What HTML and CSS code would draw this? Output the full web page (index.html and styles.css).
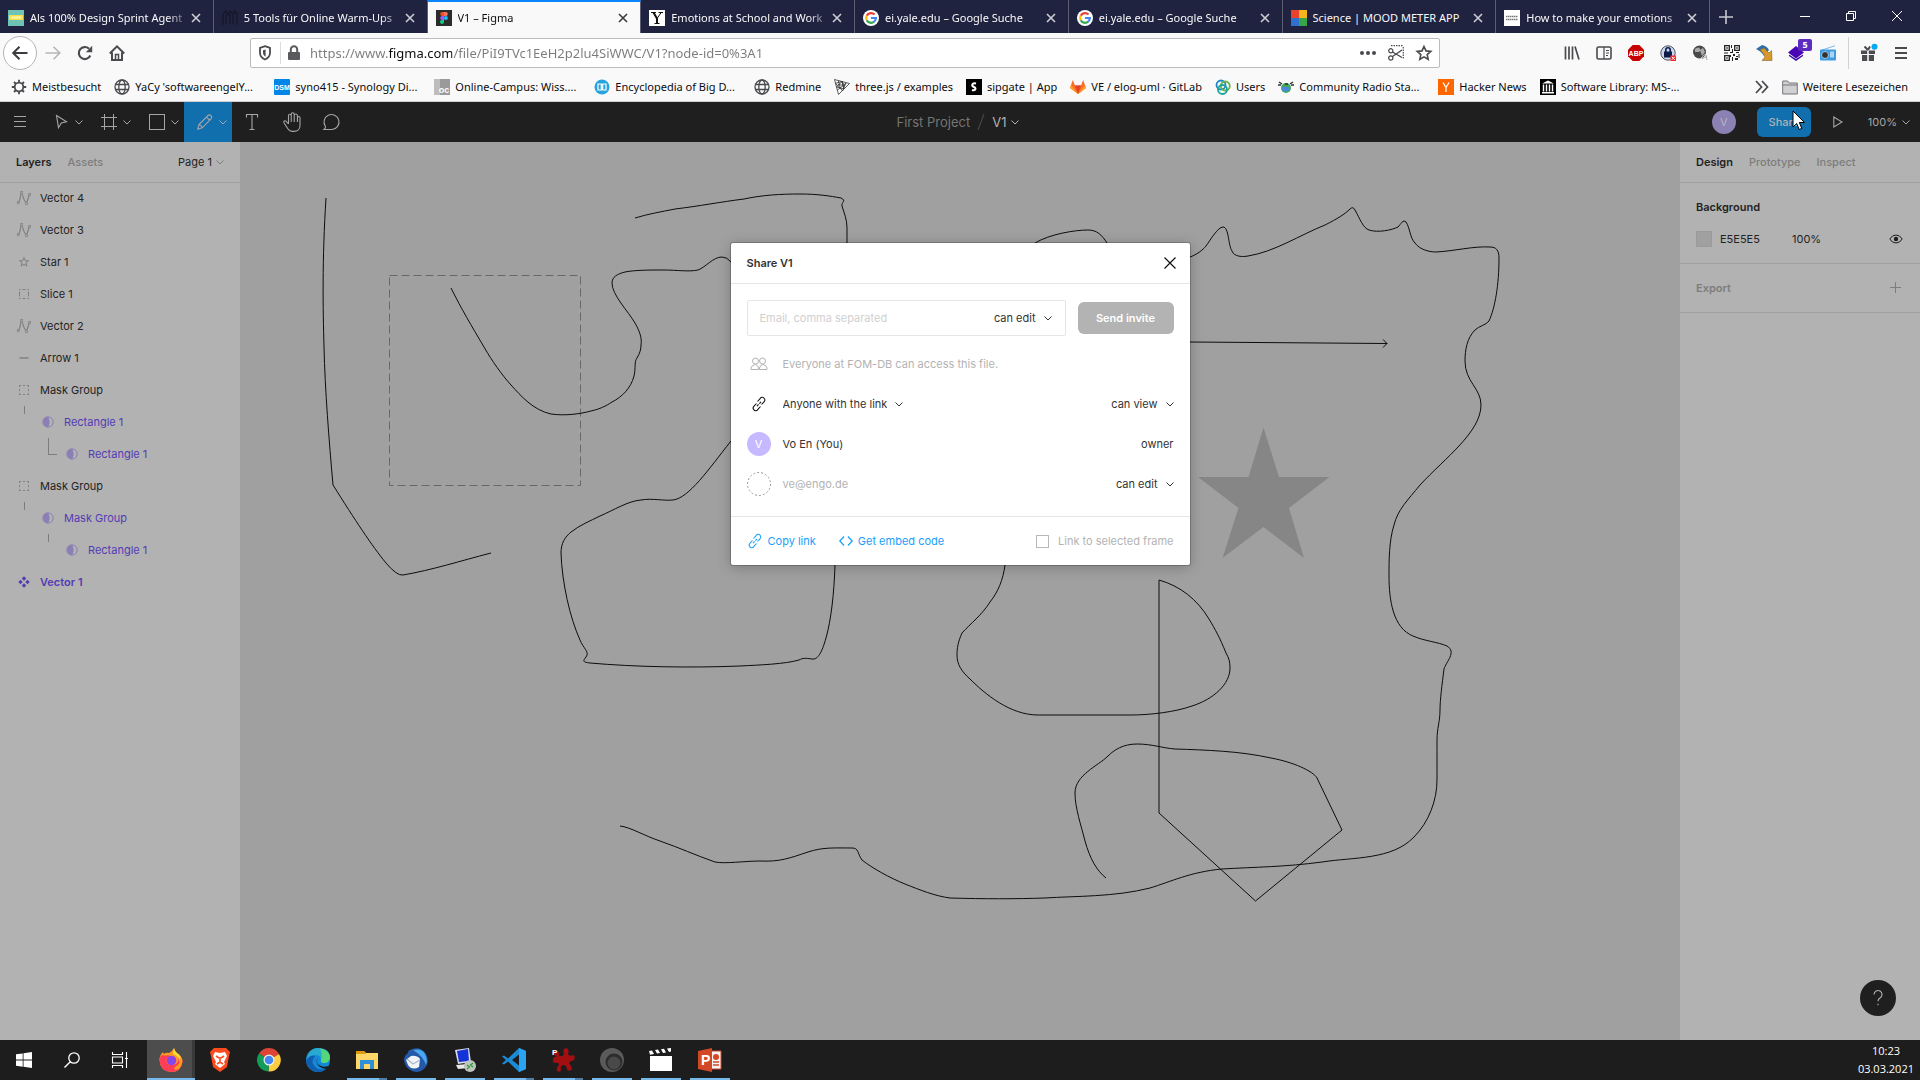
FILE: index.html
```html
<!DOCTYPE html>
<html lang="de">
<head>
<meta charset="utf-8">
<title>V1 – Figma</title>
<link rel="stylesheet" href="styles.css">
</head>
<body>
<svg class="defs" aria-hidden="true">
  <symbol id="chev" viewBox="0 0 8 8"><path d="M.5 2.500 4 6l3.500-3.500" fill="none" stroke="currentColor"/></symbol>
  <symbol id="x" viewBox="0 0 10 10"><path d="M1 1l8 8M9 1 1 9" fill="none" stroke="currentColor" stroke-width="1.600"/></symbol>
  <symbol id="vec" viewBox="0 0 16 16"><path d="M2.500 12C5 10 4 3.500 5.500 3.500S7.500 12 10 12s1.500-5 3.500-7" fill="none" stroke="currentColor" stroke-width="1.200"/><path d="M1.300 11.500h2v2h-2zM12.500 3.500h2v2h-2zM4.500 1.500h2v2h-2zM9.500 12.500h2v2h-2z" fill="#b2b2b2" stroke="currentColor" stroke-width=".8"/></symbol>
  <symbol id="grp" viewBox="0 0 16 16"><path d="M3.500 5V3.500H5M7 3.500h2M11 3.500h1.500V5M12.500 7v2M12.500 11v1.500H11M9 12.500H7M5 12.500H3.500V11M3.500 9V7" fill="none" stroke="currentColor"/></symbol>
  <symbol id="mask" viewBox="0 0 16 16"><circle cx="8" cy="8" r="5.200" fill="none" stroke="currentColor"/><path d="M8 3a5 5 0 0 0 0 10c2-2.500 2-7.500 0-10z" fill="currentColor"/></symbol>
  <symbol id="goog" viewBox="0 0 16 16"><circle cx="8" cy="8" r="8" fill="#fff"/><g fill="none" stroke-width="2.200"><path d="M11.600 4.600A4.900 4.900 0 0 0 3.700 5.800" stroke="#ea4335"/><path d="M3.700 5.800a4.900 4.900 0 0 0 0 4.400" stroke="#fbbc05"/><path d="M3.700 10.200a4.900 4.900 0 0 0 7.500 1.400" stroke="#34a853"/><path d="M11.200 11.600A4.900 4.900 0 0 0 12.900 8H8" stroke="#4285f4"/></g></symbol>
  <symbol id="world" viewBox="0 0 16 16"><g fill="none" stroke="#4a4a4f" stroke-width="1.300"><circle cx="8" cy="8" r="7"/><ellipse cx="8" cy="8" rx="3.200" ry="7"/><path d="M1.500 5.500h13M1.500 10.500h13"/></g></symbol>
  <symbol id="link" viewBox="0 0 16 16"><path d="M6.500 5.500 9.300 2.300a2.300 2.300 0 0 1 4 .2c.9 1.100.6 2.400-.3 3.300L10.500 8.500M9.500 10.500l-2.800 3.200a2.300 2.300 0 0 1-4-.2c-.9-1.100-.6-2.400.3-3.300l2.500-2.700M6 10.200l1.600-1.800M8.400 7.600 10 5.800" fill="none" stroke="currentColor" stroke-width="1.100"/></symbol>
</svg>

<header class="browser">
  <div class="tabstrip">
    <nav class="tabs">
      <div class="tab"><svg class="i16" viewBox="0 0 16 16"><rect width="16" height="16" fill="#6fc3b5"/><rect x="1" y="5" width="14" height="5" fill="#f3e04d"/><path d="M3 7.500h10" stroke="#fff6b5" stroke-width="2"/></svg><span class="tab-title">Als 100% Design Sprint Agent</span><button class="tab-x" aria-label="Tab schließen"><svg class="i10"><use href="#x"/></svg></button></div>
      <div class="tab"><svg class="i16" viewBox="0 0 16 16"><path d="M1 15V4l3-3 2 4 2-4 3 3 2-3 2 3v11M4 5v9M8 4v10M11 5v9" fill="none" stroke="#15162a" stroke-width="1.300"/></svg><span class="tab-title">5 Tools für Online Warm-Ups</span><button class="tab-x" aria-label="Tab schließen"><svg class="i10"><use href="#x"/></svg></button></div>
      <div class="tab tab-on"><svg class="i16" viewBox="0 0 16 16"><rect width="16" height="16" fill="#2c2c2c"/><path d="M8 2H6.200a2 2 0 0 0 0 4H8z" fill="#f24e1e"/><path d="M8 2h1.800a2 2 0 0 1 0 4H8z" fill="#ff7262"/><path d="M8 6H6.200a2 2 0 0 0 0 4H8z" fill="#a259ff"/><circle cx="9.900" cy="8" r="2" fill="#1abcfe"/><path d="M8 10H6.200a2 2 0 1 0 1.800 2z" fill="#0acf83"/></svg><span class="tab-title">V1 – Figma</span><button class="tab-x" aria-label="Tab schließen"><svg class="i10"><use href="#x"/></svg></button></div>
      <div class="tab"><svg class="i16" viewBox="0 0 16 16"><rect width="16" height="16" fill="#fff"/><path d="M2 2.500h5M9.500 2.500H14M5.500 13.500h5M4.300 2.500 8 8.500M12.200 2.500 8 8.500" stroke="#111" fill="none"/><path d="M4.500 2.500 8 8.500v5" stroke="#111" stroke-width="2" fill="none"/></svg><span class="tab-title">Emotions at School and Work</span><button class="tab-x" aria-label="Tab schließen"><svg class="i10"><use href="#x"/></svg></button></div>
      <div class="tab"><svg class="i16"><use href="#goog"/></svg><span class="tab-title">ei.yale.edu – Google Suche</span><button class="tab-x" aria-label="Tab schließen"><svg class="i10"><use href="#x"/></svg></button></div>
      <div class="tab"><svg class="i16"><use href="#goog"/></svg><span class="tab-title">ei.yale.edu – Google Suche</span><button class="tab-x" aria-label="Tab schließen"><svg class="i10"><use href="#x"/></svg></button></div>
      <div class="tab"><svg class="i16" viewBox="0 0 16 16"><rect width="8" height="8" fill="#e8412c"/><rect x="8" width="8" height="8" fill="#f6b51e"/><rect y="8" width="8" height="8" fill="#2f6fd0"/><rect x="8" y="8" width="8" height="8" fill="#37a548"/></svg><span class="tab-title full">Science | MOOD METER APP</span><button class="tab-x" aria-label="Tab schließen"><svg class="i10"><use href="#x"/></svg></button></div>
      <div class="tab"><svg class="i16" viewBox="0 0 16 16"><rect width="16" height="16" fill="#fff"/><path d="M2 6.500h12M2 9.500h12" stroke="#777" stroke-width="1.500" stroke-dasharray="1.500 .5"/></svg><span class="tab-title">How to make your emotions</span><button class="tab-x" aria-label="Tab schließen"><svg class="i10"><use href="#x"/></svg></button></div>
    </nav>
    <button class="newtab" aria-label="Neuer Tab"><svg width="14" height="14" viewBox="0 0 14 14"><path d="M7 0v14M0 7h14" stroke="#c8c8d0" stroke-width="1.600"/></svg></button>
    <div class="winctl">
      <button aria-label="Minimieren"><svg width="10" height="10"><path d="M0 5.500h10" stroke="#fff"/></svg></button>
      <button aria-label="Verkleinern"><svg width="10" height="10"><path d="M.5 2.500h7v7h-7zM2.500 2.500v-2h7v7h-2" fill="none" stroke="#fff"/></svg></button>
      <button aria-label="Schließen"><svg width="10" height="10"><path d="M0 0l10 10M10 0 0 10" stroke="#fff"/></svg></button>
    </div>
  </div>

  <div class="navbar">
    <button class="nb back" aria-label="Zurück"><svg class="i16" viewBox="0 0 16 16"><path d="M15.500 8H1.500M7.500 1.700 1.200 8l6.300 6.300" fill="none" stroke="#3c3c40" stroke-width="2"/></svg></button>
    <button class="nb" aria-label="Vor"><svg class="i16" viewBox="0 0 16 16"><path d="M.5 8h14M8.500 1.700 14.800 8l-6.300 6.300" fill="none" stroke="#b6b6b8" stroke-width="1.600"/></svg></button>
    <button class="nb" aria-label="Neu laden"><svg class="i16" viewBox="0 0 16 16"><path d="M13.300 10.500A6 6 0 1 1 12 3.700" fill="none" stroke="#4a4a4f" stroke-width="2.200"/><path d="M15.200.8v6.400H8.800z" fill="#4a4a4f"/></svg></button>
    <button class="nb" aria-label="Startseite"><svg class="i16" viewBox="0 0 16 16"><path d="M.8 8.500 8 1.300l7.200 7.200M3 7.500V15h10V7.500" fill="none" stroke="#4a4a4f" stroke-width="2"/><path d="M6.500 14V9.500h3V14" fill="none" stroke="#4a4a4f" stroke-width="1.500"/></svg></button>
    <div class="urlbox">
      <svg class="i16" viewBox="0 0 16 16"><path d="M8 1.200 13 3v4.500c0 3.500-1.700 5.700-5 7-3.300-1.300-5-3.500-5-7V3z" fill="none" stroke="#4a4a4f" stroke-width="1.800"/><path d="M8.600 4.500v7.300C6.500 10.500 6 9 6 7.500V5.200z" fill="#4a4a4f"/></svg>
      <span class="urlsep"></span>
      <svg class="i16" viewBox="0 0 16 16"><rect x="2" y="7" width="12" height="8" rx="1" fill="#5a5a5e"/><path d="M4.800 8V4.500a3.200 3.200 0 0 1 6.400 0V8" fill="none" stroke="#5a5a5e" stroke-width="2"/></svg>
      <input class="url" type="text" aria-label="Adresse" value="https://www.figma.com/file/PiI9TVc1EeH2p2lu4SiWWC/V1?node-id=0%3A1">
      <div class="urlacts">
        <button aria-label="Seitenaktionen"><svg class="i16" viewBox="0 0 16 16"><g fill="#4a4a4f"><circle cx="2" cy="8" r="2"/><circle cx="8" cy="8" r="2"/><circle cx="14" cy="8" r="2"/></g></svg></button>
        <button aria-label="Ausschneiden"><svg class="i16" viewBox="0 0 16 16"><path d="M3 .7h12.500M15.300 2v12" fill="none" stroke="#4a4a4f" stroke-width="1.200" stroke-dasharray="1.500 1"/><path d="M4.500 7 14 12.500M4.500 11.500 14 5" stroke="#4a4a4f" stroke-width="1.400"/><circle cx="2.800" cy="13" r="2.100" fill="none" stroke="#4a4a4f" stroke-width="1.200"/><circle cx="2.800" cy="5.800" r="2.100" fill="none" stroke="#4a4a4f" stroke-width="1.200"/></svg></button>
        <button aria-label="Lesezeichen"><svg class="i16" viewBox="0 0 16 16"><path d="M8 1.500l2 4.400 4.800.5-3.600 3.200 1 4.700L8 11.900l-4.200 2.400 1-4.700L1.200 6.400 6 5.900z" fill="none" stroke="#4a4a4f" stroke-width="1.600"/></svg></button>
      </div>
    </div>
    <div class="exts">
      <button aria-label="Bibliothek"><svg class="i16" viewBox="0 0 16 16"><path d="M1.500 1.500v13M5 1.500v13M8.500 1.500v13M11 1.500l4 13" stroke="#4a4a4f" stroke-width="1.700"/></svg></button>
      <button aria-label="Seitenleiste"><svg class="i16" viewBox="0 0 16 16"><rect x="1" y="2" width="14" height="12" rx="1.500" fill="none" stroke="#4a4a4f" stroke-width="1.600"/><path d="M8 2v12M10 5.500h3M10 8h3M10 10.500h2" stroke="#4a4a4f" stroke-width="1.200"/></svg></button>
      <button aria-label="Adblock Plus"><svg class="i16" viewBox="0 0 16 16"><path d="M4.700 0h6.600L16 4.700v6.600L11.300 16H4.700L0 11.300V4.700z" fill="#c70000"/><text x="8" y="10.500" class="t-abp">ABP</text></svg></button>
      <button aria-label="Passwörter"><svg class="i16" viewBox="0 0 16 16"><circle cx="8" cy="8" r="7.200" fill="#c9d6f0" stroke="#555"/><rect x="4" y="6.500" width="8" height="6" fill="#0c1c48"/><path d="M5.800 7V5a2.200 2.200 0 0 1 4.400 0V7" fill="none" stroke="#0c1c48" stroke-width="1.600"/><rect x="10.500" y="10.500" width="5.500" height="5.500" fill="#f22"/><path d="M11.800 11.800l3 3M14.800 11.800l-3 3" stroke="#fff"/></svg></button>
      <button aria-label="Kugel"><svg class="i16" viewBox="0 0 16 16"><circle cx="7.500" cy="7" r="6.500" fill="#4a4a4a"/><path d="M3 4q4-3 5 0t-2 3-3 0zM8 5l3-2 2 4-3 4z" fill="#aaa"/><path d="M9 13l4-4M14 10l1 5M10 14l5-3" stroke="#aaa"/></svg></button>
      <button aria-label="QR-Code"><svg class="i16" viewBox="0 0 16 16"><path d="M.7.7h4.600v4.600H.7zM10.700.7h4.600v4.600h-4.600zM.7 10.700h4.600v4.600H.7z" fill="none" stroke="#222" stroke-width="1.300"/><path d="M2.300 2.300h1.400v1.400H2.300zM12.300 2.300h1.400v1.400h-1.400zM2.300 12.300h1.400v1.400H2.300zM7 0h1v3H7zM8 4h1v3H8zM6 7h3v1H6zM12 7h3v1h-3zM9 9h2v2H9zM12 11h2v1h-2zM11 13h3v2h-3zM8 12h1v4H8zM0 7.500h4v1H0zM14.500 9h1v4h-1zM6 10h1v2H6z" fill="#222"/></svg></button>
      <button aria-label="Pfeil"><svg class="i16" viewBox="0 0 16 16"><path d="M0 4 6 0q5 1 7 5l-5 6Q6 7 0 4z" fill="#2f6ea6"/><path d="M4 5 8 3l5 5 2.500-2.500.5 10H6L9 12q-1-4-5-7z" fill="#d9982b" stroke="#7a6433" stroke-width=".6"/></svg></button>
      <button class="badged" aria-label="Erweiterung"><svg class="i16" viewBox="0 0 16 16"><path d="M1 9.500l7 4.500 7-4.500v1.500L8 16 1 11z" fill="#3a0ca3"/><path d="M8 1l8 6.500-8 6-8-6z" fill="#4a05b5"/></svg><span class="badge">5</span></button>
      <button aria-label="Radio"><svg class="i16" viewBox="0 0 16 16"><path d="M2 5 15 .8" stroke="#7bb8e6"/><rect y="4.500" width="16" height="11" rx="1" fill="#3d9be0"/><circle cx="5" cy="10" r="3.500" fill="#333" stroke="#9fd0f5"/><rect x="10" y="6.500" width="4" height="6" fill="#a9d6f7"/></svg></button>
      <span class="exsep"></span>
      <button class="gift" aria-label="Neuigkeiten"><svg class="i16" viewBox="0 0 16 16"><path d="M1 5.500h6.200V9H1zM8.800 5.500H15V9H8.800zM2 10h5.200v6H2zM8.800 10H14v6H8.800z" fill="#4a4a4f"/><path d="M8 5 4.500 1.500M8 5l2-3.500" stroke="#4a4a4f" stroke-width="2"/><circle cx="14.500" cy="1.800" r="3" fill="#00a8f5"/></svg></button>
      <button aria-label="Menü"><svg class="i16" viewBox="0 0 16 16"><path d="M2 3h12M2 8h12M2 13h12" stroke="#4a4a4f" stroke-width="2"/></svg></button>
    </div>
  </div>

  <nav class="bookmarks">
    <a href="#"><svg class="i16" viewBox="0 0 16 16"><circle cx="8" cy="8" r="4.300" fill="none" stroke="#4a4a4f" stroke-width="1.800"/><path d="M8 .8v3M8 12.200v3M.8 8h3M12.200 8h3M3 3l2 2M11 11l2 2M13 3l-2 2M5 11l-2 2" stroke="#4a4a4f" stroke-width="1.800"/></svg>Meistbesucht</a>
    <a class="long" href="#"><svg class="i16"><use href="#world"/></svg>YaCy 'softwareengelY...</a>
    <a class="long" href="#"><svg class="i16" viewBox="0 0 16 16"><rect width="16" height="16" rx="1" fill="#0086e6"/><text x="8" y="10.500" class="t-abp">DSM</text></svg>syno415 - Synology Di...</a>
    <a class="long" href="#"><svg class="i16" viewBox="0 0 16 16"><rect width="16" height="16" fill="#9a9a9a"/><rect width="6" height="16" fill="#bdbdbd"/><text x="10" y="14" class="t-oc">oc</text></svg>Online-Campus: Wiss....</a>
    <a class="long" href="#"><svg class="i16" viewBox="0 0 16 16"><circle cx="8" cy="8" r="7.500" fill="#27a4dd"/><path d="M4 5h3.300v6H4zM8.700 5H12v6H8.700z" fill="none" stroke="#fff" stroke-width="1.200"/></svg>Encyclopedia of Big D...</a>
    <a href="#"><svg class="i16"><use href="#world"/></svg>Redmine</a>
    <a href="#"><svg class="i16" viewBox="0 0 16 16"><path d="M.5.5l15 4L4.500 15.500zM8 2.500 10 10 2.500 8zM4.300 1.500 6.300 9 12 4l-3.500 8-2.300-3L1.500 4.300 8 2.500M6.300 9l-3 2M10 10 8 2.500l2.500 4L4 5.500" fill="none" stroke="#333" stroke-width=".8"/></svg>three.js / examples</a>
    <a href="#"><svg class="i16" viewBox="0 0 16 16"><rect width="16" height="16"/><path d="M10 4.500c-4-1-5 2-2 3.500s1 4-2 3" fill="none" stroke="#fff" stroke-width="2"/></svg>sipgate | App</a>
    <a href="#"><svg class="i16" viewBox="0 0 16 16"><path d="M8 15 0 9l2.800-8L5 6.500h6L13.200 1 16 9z" fill="#fc6d26"/><path d="M8 15 5 6.500h6z" fill="#e24329"/><path d="M0 9l1-3 7 9zM16 9l-1-3-7 9z" fill="#fca326"/></svg>VE / elog-uml · GitLab</a>
    <a href="#"><svg class="i16" viewBox="0 0 16 16"><g fill="none" stroke-width="1.800"><circle cx="6" cy="6" r="4.500" stroke="#1d86c8"/><circle cx="10.300" cy="7" r="4.500" stroke="#63b345"/><circle cx="7.500" cy="10.500" r="4.500" stroke="#1ba39a"/></g></svg>Users</a>
    <a class="long" href="#"><svg class="i16" viewBox="0 0 16 16"><circle cx="8" cy="9" r="5" fill="#3fa65a"/><path d="M4 8h8v3q-4 3-8 0z" fill="#4b8ad8"/><path d="M1 3l3 2M15 3l-3 2M0 6h3M13 6h3M7 5h3" stroke="#333" stroke-width="1.500"/></svg>Community Radio Sta...</a>
    <a href="#"><svg class="i16" viewBox="0 0 16 16"><rect width="16" height="16" fill="#f60"/><path d="M5 3.500l3 5 3-5M8 8.500v4.500" fill="none" stroke="#fff" stroke-width="1.300"/></svg>Hacker News</a>
    <a class="long" href="#"><svg class="i16" viewBox="0 0 16 16"><rect width="16" height="16"/><path d="M2 4.500 8 1.500l6 3zM2 13h12v1.500H2z" fill="#fff"/><path d="M3.500 5.500v7M6.500 5.500v7M9.500 5.500v7M12.500 5.500v7" stroke="#fff" stroke-width="1.400"/></svg>Software Library: MS-...</a>
    <button class="more" aria-label="Weitere anzeigen"><svg width="14" height="14" viewBox="0 0 14 14"><path d="M1 1l5.500 6L1 13M7 1l5.500 6L7 13" fill="none" stroke="#4a4a4f" stroke-width="1.800"/></svg></button>
    <a href="#"><svg class="i16" viewBox="0 0 16 16"><path d="M.7 15V2h5l1.500 2h8.100v11z" fill="#d0d0d2" stroke="#77777a"/><path d="M.7 6h14.600" stroke="#77777a"/></svg>Weitere Lesezeichen</a>
  </nav>
</header>

<div class="app">
  <div class="toolbar">
    <div class="tools">
      <button class="tool" aria-label="Menu"><svg width="16" height="16"><path d="M2 2.500h12M2 7.500h12M2 12.500h12" stroke="currentColor"/></svg></button>
      <button class="tool wide" aria-label="Move"><svg class="i16" viewBox="0 0 16 16"><path d="M3.500 1.500l10 6.200-5.200 1.200-2.800 4.800z" fill="none" stroke="currentColor" stroke-width="1.100"/></svg><svg class="i8"><use href="#chev"/></svg></button>
      <button class="tool wide" aria-label="Frame"><svg class="i16" viewBox="0 0 16 16"><path d="M3.500 0v16M12.500 0v16M0 3.500h16M0 12.500h16" stroke="currentColor"/></svg><svg class="i8"><use href="#chev"/></svg></button>
      <button class="tool wide" aria-label="Rectangle"><svg class="i16"><rect x=".5" y=".5" width="15" height="15" fill="none" stroke="currentColor"/></svg><svg class="i8"><use href="#chev"/></svg></button>
      <button class="tool wide tool-on" aria-label="Pencil"><svg class="i16" viewBox="0 0 16 16"><path d="M.8 15.200 2 10.500 11 1.500q1.500-1.200 3 .2t.2 3L5.200 13.800zM9.500 3l3.300 3.300M2 10.500q2.500.5 3.200 3.300" fill="none" stroke="currentColor" stroke-width="1.100"/></svg><svg class="i8"><use href="#chev"/></svg></button>
      <button class="tool" aria-label="Text"><svg class="i16" viewBox="0 0 16 16"><path d="M2.500 3.500v-3h11v3M8 .5v15M5.500 15.500h5" fill="none" stroke="currentColor" stroke-width="1.100"/></svg></button>
      <button class="tool" aria-label="Hand"><svg width="18" height="20" viewBox="0 0 18 20"><path d="M5.500 12 3 9.200C1.800 8.200.2 9.300 1 10.800l4 6.200c1 1.600 2.500 2.400 4.500 2.400h1.500c3.500 0 6-2.400 6-6V6c0-2-2.500-2-2.500 0v4M5.500 12V3.800c0-2 2.700-2 2.700 0V10M8.200 3.800V2.300c0-2 3-2 3 0V10M11.200 3.500c0-2 3.200-2 3.200 0V10" fill="none" stroke="currentColor" stroke-width="1.100"/></svg></button>
      <button class="tool" aria-label="Comment"><svg width="18" height="18" viewBox="0 0 18 18"><path d="M1 16.500c1-.8 1.500-2 1.500-3A7.500 7.500 0 1 1 9 16.500z" fill="none" stroke="currentColor" stroke-width="1.100"/></svg></button>
    </div>
    <div class="title"><a href="#">First Project</a><svg width="8" height="16"><path d="M1 16 7 0" stroke="#4e4e4e"/></svg><button>V1<svg class="i8"><use href="#chev"/></svg></button></div>
    <div class="actions">
      <span class="avatar dim">V</span>
      <button class="share">Share</button>
      <button class="play" aria-label="Present"><svg width="10" height="12"><path d="M.8 1v10L9 6z" fill="none" stroke="currentColor" stroke-width="1.100"/></svg></button>
      <button class="zoom">100%<svg class="i8"><use href="#chev"/></svg></button>
      <svg class="cursor" width="14" height="22" viewBox="0 0 14 22"><path d="M1 1v16l3.700-3.500L7.200 19.500l2.600-1.100-2.500-5.900H12.500z" fill="#fff" stroke="#000"/></svg>
    </div>
  </div>

  <div class="work">
    <aside class="layers">
      <div class="phead"><button class="on">Layers</button><button>Assets</button><button class="page">Page 1<svg class="i8"><use href="#chev"/></svg></button></div>
      <ul>
        <li><svg class="i16"><use href="#vec"/></svg>Vector 4</li>
        <li><svg class="i16"><use href="#vec"/></svg>Vector 3</li>
        <li><svg class="i16" viewBox="0 0 16 16"><path d="M8 3.500l1.200 3.200 3.300.1-2.600 2 .9 3.300L8 10.300l-2.800 1.800.9-3.300-2.600-2 3.300-.1z" fill="none" stroke="currentColor"/></svg>Star 1</li>
        <li><svg class="i16" viewBox="0 0 16 16"><path d="M3 3.500h1.500M6.500 3.500h3M11.500 3.500H13M3 12.500h1.500M6.500 12.500h3M11.500 12.500H13M3.500 5.500v5M12.500 5.500v5" fill="none" stroke="currentColor"/></svg>Slice 1</li>
        <li><svg class="i16"><use href="#vec"/></svg>Vector 2</li>
        <li><svg class="i16"><path d="M3.500 8h9" stroke="currentColor" stroke-width="1.500"/></svg>Arrow 1</li>
        <li><svg class="i16"><use href="#grp"/></svg>Mask Group</li>
        <li class="l1 violet"><svg class="i16"><use href="#mask"/></svg>Rectangle 1</li>
        <li class="l2 violet elbow"><svg class="i16"><use href="#mask"/></svg>Rectangle 1</li>
        <li><svg class="i16"><use href="#grp"/></svg>Mask Group</li>
        <li class="l1 violet"><svg class="i16"><use href="#mask"/></svg>Mask Group</li>
        <li class="l2 violet"><svg class="i16"><use href="#mask"/></svg>Rectangle 1</li>
        <li class="violet comp"><svg class="i16" viewBox="0 0 16 16"><path d="M8 2.300 10.200 4.500 8 6.700 5.800 4.500zM8 9.300l2.200 2.200L8 13.700l-2.200-2.200zM4.500 5.800 6.700 8l-2.200 2.200L2.300 8zM11.500 5.800 13.700 8l-2.200 2.200L9.300 8z" fill="currentColor"/></svg>Vector 1</li>
      </ul>
    </aside>

    <main class="canvas">
      <svg class="drawing" aria-label="V1">
        <g transform="translate(-240 -142)" fill="none" stroke="#0c0c0c">
          <path d="M326 198C322 260 323 310 324 347C325 390 329 440 333 485C355 520 372 546 386 563Q397 576 403 575C432 570 460 561 491 553"/>
          <rect x="389.500" y="275.500" width="191" height="210" stroke="#686868" stroke-dasharray="8 4"/>
          <path d="M451 288C462 310 471 325 484 347C492 361 502 375 511 385C521 396 533 410 551 414C565 416 580 414 591 411C600 409 606 406 612 402C622 397 631 388 634 376C636 367 634 362 637 358C640 353 641 349 641 345C642 338 640 332 635 323C628 311 612 295 612 283C612 277 617 274 625 272C635 270 650 270 663 270C678 270 689 272 698 270C706 267 713 257 722 257Q727 257 731 262"/>
          <path d="M635 218C648 214 660 212 675 209C700 206 720 202 744 199C763 195 780 194 800 194C818 194 830 196 841 198C847 201 841 202 842 206C844 213 847 219 847 228V243V400L835 565C834 595 831 620 826 638C822 652 818 660 812 659C805 658 803 658 799 660C785 664 760 665 740 666C690 668 635 667 590 663C582 662 583 661 586 657C590 652 583 648 580 640C570 618 562 583 561 553C561 543 565 537 571 532C580 525 590 521 600 516C614 510 628 501 641 500C653 498 663 501 673 500C689 498 708 470 731 441"/>
          <path d="M1035 243C1050 234 1075 230 1088 230C1097 230 1102 235 1107 243"/>
          <path d="M1190 257C1196 255 1203 250 1206 246C1211 239 1218 227 1223 227C1229 227 1228 245 1232 251C1234 257 1243 257 1248 256C1274 252 1300 235 1325 225C1337 219 1345 214 1350 209Q1353 206 1355 210C1360 219 1363 228 1369 230C1378 233 1392 230 1398 227C1401 224 1403 219 1406 222C1410 228 1410 238 1415 243C1420 250 1430 252 1436 252C1455 251 1473 246 1490 247C1496 247 1499 250 1499 258C1499 285 1495 308 1489 321C1486 325 1479 326 1475 330C1467 338 1465 350 1465 361C1465 382 1481 388 1481 405C1481 432 1445 458 1420 485C1408 500 1398 509 1394 525C1389 541 1389 560 1389 576C1389 600 1393 628 1413 636C1424 641 1438 642 1447 646C1457 652 1446 662 1444 669C1442 685 1440 700 1440 710C1440 722 1437 728 1437 740C1437 755 1437 765 1437 780C1437 800 1429 822 1414 837C1392 860 1354 857 1322 862C1285 867 1255 867 1222 869C1190 872 1170 882 1150 888C1115 897 1075 896 1045 898C1015 899 985 899 950 898C935 896 920 890 905 884C890 878 872 868 862 860C857 853 859 848 852 848C835 848 823 847 808 852C790 858 780 862 760 861C745 861 725 864 715 862C695 855 680 848 660 841C645 836 630 827 620 826"/>
          <path d="M1190 342 1387 343.500M1383 339.500l4 4-4 4"/>
          <path d="M1263.500 427.500 1279 477h50.500L1289 508l15 50-40.500-31-41 31 16-50L1198 477h50.500z" fill="#868686" stroke="none"/>
          <path d="M1005 565C1003 580 998 592 990 602C982 615 970 624 962 633C958 642 957 648 957 655C957 664 961 671 970 679C985 694 1010 715 1038 715H1131C1150 715 1175 712 1192 706C1214 699 1230 684 1230 668C1230 662 1229 658 1226 653C1220 638 1215 629 1209 619C1197 599 1180 586 1159 580V813L1255.500 901 1342 830 1317 778C1313 771 1293 762 1271 758C1240 751 1205 750 1175 749C1162 748 1152 744 1137 744C1123 744 1114 750 1108 756C1098 766 1075 775 1075 793C1075 808 1081 825 1085 841C1090 859 1097 871 1106 878"/>
        </g>
      </svg>
    </main>

    <aside class="design">
      <div class="phead"><button class="on">Design</button><button>Prototype</button><button>Inspect</button></div>
      <section class="bg">
        <h2>Background</h2>
        <div class="bgrow"><span class="swatch"></span><span class="hex">E5E5E5</span><span class="pct">100%</span><button aria-label="Toggle visibility"><svg width="14" height="10" viewBox="0 0 14 10"><path d="M.8 5Q3 1 7 1t6.200 4Q11 9 7 9T.8 5z" fill="none" stroke="#1d1d1d"/><circle cx="7" cy="5" r="2.200" fill="#1d1d1d"/></svg></button></div>
      </section>
      <section class="export"><h2>Export</h2><button aria-label="Add export"><svg width="12" height="12"><path d="M5.500 0v11M0 5.500h11" stroke="#7d7d7d"/></svg></button></section>
      <button class="help" aria-label="Help"><svg width="12" height="16" viewBox="0 0 12 16"><path d="M2 4.500a4 4 0 1 1 6 3.500Q6 9.200 6 11.200M6 13.800v1.400" fill="none" stroke="#b4b4b4" stroke-width="1.100"/></svg></button>
    </aside>
  </div>

  <div class="overlay">
    <div class="modal" role="dialog" aria-labelledby="dlg">
      <div class="mhead"><h1 id="dlg">Share V1</h1><button aria-label="Close"><svg width="12" height="12"><path d="M.5.5l11 11M11.500.5l-11 11" stroke="#111" stroke-width="1.200"/></svg></button></div>
      <div class="mbody">
        <form class="invite">
          <div class="field"><input type="text" placeholder="Email, comma separated" aria-label="Email"><label class="sel"><select aria-label="Invite permission"><option>can edit</option></select><svg class="i8"><use href="#chev"/></svg></label></div>
          <button type="button" class="send">Send invite</button>
        </form>
        <div class="row muted"><span class="ic"><svg width="18" height="14" viewBox="0 0 18 14"><g fill="none" stroke="currentColor"><circle cx="5.500" cy="4" r="3"/><circle cx="12.500" cy="4" r="3"/><path d="M1 12.500h7.500V11Q8 8 5.500 7.500 1.500 8 1 11zM9.500 12.500H17V11q-.5-3-4-3.500Q10 8 9.500 11z"/></g></svg></span><span>Everyone at FOM-DB can access this file.</span></div>
        <div class="row"><span class="ic"><svg class="i16"><use href="#link"/></svg></span><label class="sel"><select aria-label="Link audience"><option>Anyone with the link</option></select><svg class="i8"><use href="#chev"/></svg></label><label class="sel end"><select aria-label="Link permission"><option>can view</option></select><svg class="i8"><use href="#chev"/></svg></label></div>
        <div class="row"><span class="avatar">V</span><span>Vo En (You)</span><span class="end">owner</span></div>
        <div class="row"><svg width="24" height="24"><circle cx="12" cy="12" r="11.500" fill="none" stroke="#999" stroke-dasharray="2 2"/></svg><span class="muted">ve@engo.de</span><label class="sel end"><select aria-label="Member permission"><option>can edit</option></select><svg class="i8"><use href="#chev"/></svg></label></div>
      </div>
      <div class="mfoot">
        <a href="#"><svg class="i16"><use href="#link"/></svg>Copy link</a>
        <a href="#"><svg width="14" height="10"><path d="M5 .5.800 5 5 9.500M9 .5 13.200 5 9 9.500" fill="none" stroke="currentColor" stroke-width="1.200"/></svg>Get embed code</a>
        <label class="check"><input type="checkbox">Link to selected frame</label>
      </div>
    </div>
  </div>
</div>

<footer class="taskbar">
  <div class="sys">
    <button aria-label="Start"><svg class="i16" viewBox="0 0 16 16"><path d="M0 2.300 6.700 1.400V7.600H0zM7.500 1.300 16 0v7.600H7.500zM0 8.400h6.700v6.300L0 13.700zM7.500 8.400H16V16l-8.500-1.200z" fill="#fff"/></svg></button>
    <button aria-label="Suche"><svg class="i16" viewBox="0 0 16 16"><circle cx="10" cy="6" r="5.200" fill="none" stroke="#fff" stroke-width="1.300"/><path d="M6.300 9.800.5 15.600" stroke="#fff" stroke-width="1.400"/></svg></button>
    <button aria-label="Taskansicht"><svg class="i16" viewBox="0 0 16 16"><path d="M.5 0v2.500h10V0M.5 16v-2.500h10V16M.5 5h10v6H.5zM14.500 0v16M13 6.500h3" fill="none" stroke="#fff" stroke-width="1.100"/></svg></button>
  </div>
  <div class="tasks">
    <button class="task cur" aria-label="Firefox"><svg class="i24" viewBox="0 0 24 24"><path d="M15 0q1 4 5 6.500Q24 10 23.500 14 22 24 12 24 1 23 .5 12 .5 7 4 4l1 2q2-2 5-1 3-1 5-5z" fill="#ff9a1f"/><path d="M.5 12Q1 8 3 7q4 1 6 0l2 1q-5 2-3 7 3 4 9 1 5-5 1-10 5 3 5.500 8Q22 24 12 24 1 23 .5 12z" fill="#ff3d57"/><path d="M15 0q1 4 5 6.500Q24 12 21 16q0-8-7-10 0-3 1-6z" fill="#ffdb38"/><path d="M23 11Q24 20 17 22q-3-1-1-3 6-3 5-9z" fill="#ff9a1f"/><circle cx="12.500" cy="12.500" r="4.800" fill="#8747e8"/></svg></button>
    <button class="task" aria-label="Brave"><svg class="i24" viewBox="0 0 24 24"><path d="M6 0h12l4 4-1 4-2 11-7 5-7-5L3 8 2 4z" fill="#fb4a1e"/><path d="M7 4l5 1 5-1 2 4-3 6 1 2-5 4-5-4 1-2-3-6z" fill="#fff"/><path d="M8 8l3 2M16 8l-3 2M12 9v5M9 16l3-2 3 2" stroke="#fb4a1e" stroke-width="1.600" fill="none"/></svg></button>
    <button class="task" aria-label="Chrome"><svg class="i24" viewBox="0 0 24 24"><path d="M12 12 2 5.500A11.500 11.500 0 0 1 22 6z" fill="#db4437"/><path d="M12 12l10-6a11.500 11.500 0 0 1-10.500 17.500z" fill="#ffcd40"/><path d="M12 12l-.5 11.500A11.500 11.500 0 0 1 2 5.500z" fill="#0f9d58"/><circle cx="12" cy="12" r="5.500" fill="#f1f1f1"/><circle cx="12" cy="12" r="4.300" fill="#4285f4"/></svg></button>
    <button class="task" aria-label="Edge"><svg class="i24" viewBox="0 0 24 24"><circle cx="12" cy="12" r="12" fill="#1489d8"/><path d="M1 9Q4 0 12 0q12 0 12 10-1 5-6 5-4 0-3-3 0-5-6-5-5 0-8 4z" fill="#27a9d0"/><path d="M14 0.500q10 2 10 9.500-1 5-6 5-4 0-3-3 2-6-1-11.500z" fill="#55d67a"/><path d="M9 8q-5 6 0 11 5 5 13 0-4 5-10 5Q2 23 0 13q3-6 9-5z" fill="#0f5fae"/><path d="M12 10q-3 4 1 7 4 3 9 1l1 2-1 1q-7 0-10-4-3-4 0-7z" fill="#1d1d1d"/></svg></button>
    <button class="task run multi" aria-label="Explorer"><svg class="i24" viewBox="0 0 24 24"><path d="M1 3h8l2 2h12v16H1z" fill="#ffd668"/><path d="M1 3h8l2 3H1z" fill="#dc9a0c"/><path d="M5 21v-9h14v9h-4v-5H9v5z" fill="#2f8fd8"/></svg></button>
    <button class="task run" aria-label="Thunderbird"><svg class="i24" viewBox="0 0 24 24"><path d="M8 1q9-3 14 5 4 8-1 14-6 6-13 3Q1 20 0 12 0 8 4 5 3 3 8 1z" fill="#2459a8"/><path d="M9 2q9-2 12 4 3 6 1 11-3-9-13-15z" fill="#4aa8ee"/><path d="M2 12l5-4q6-1 9 3l-1 8q-7 4-11-2z" fill="#f1f3f7"/><path d="M3 11l6 5 7-4" fill="none" stroke="#a9b7cb" stroke-width="1.200"/></svg></button>
    <button class="task run" aria-label="Remotedesktop"><svg class="i24" viewBox="0 0 24 24"><path d="M2 2l14-2 2 14-13 2z" fill="#d5dbe8"/><path d="M4 3l11-2 1 12-10 1z" fill="#1333d6"/><path d="M3 17l12-1 1 4-11 1z" fill="#e8e8e8"/><circle cx="17" cy="18" r="6" fill="#bfc4bf"/><path d="M14 17l2.500 2L14 21M20 15l-2.500 2 2.500 2" fill="none" stroke="#2d9b35" stroke-width="1.300"/></svg></button>
    <button class="task run multi" aria-label="Visual Studio Code"><svg class="i24" viewBox="0 0 24 24"><path d="M17 0 6 10.500 2 7.500 0 8.500 4 12l-4 3.500 2 1 4-3L17 24l7-3V3zM17 6.500v11L10 12z" fill="#1b8bd8" fill-rule="evenodd"/><path d="M17 0v24l7-3V3z" fill="#2ba5f2"/></svg></button>
    <button class="task run multi" aria-label="Puzzle"><svg class="i24" viewBox="0 0 24 24"><path d="M1 5q1-4 5-2 3 2 2 5 4 1 5-2-2-5 2-6 4 1 2 6 1 3 5 1 3 2 1 5-4 1-5 3 3 4 3 6-2 3-5 1 0-5-4-5-3 1-2 5-1 3-4 1-1-3 2-6 0-3-4-2-3-1-2-4 1-3 4-2z" fill="#a30f10"/><text x="1" y="7" class="t-p">P</text></svg></button>
    <button class="task run" aria-label="Kreis"><svg class="i24" viewBox="0 0 24 24"><circle cx="12" cy="12" r="12" fill="#5a5a5a"/><circle cx="14" cy="14" r="8.500" fill="#2c2c2c"/><circle cx="14" cy="15" r="6.500" fill="#494949"/></svg></button>
    <button class="task run" aria-label="Filme"><svg class="i24" viewBox="0 0 24 24"><path d="M1 8h22v15H1z" fill="#fff"/><path d="M0 3l3-.5L5 6l-4 .7zM6 2l3-.5L11 5l-3 .6zM12 1.300l3-.5L17 4.500l-3 .5zM18 .5l4-.5v3.500l-2 .4z" fill="#fff"/></svg></button>
    <button class="task run" aria-label="PowerPoint"><svg class="i24" viewBox="0 0 24 24"><path d="M13 3h10v18H13z" fill="#f4f4f4" stroke="#d24726"/><path d="M15 14h6M15 17h6" stroke="#d24726" stroke-width="1.500"/><circle cx="18" cy="9" r="3" fill="#d24726"/><path d="M0 3l14-3v24L0 21z" fill="#d24726"/><text x="3" y="17" class="t-ppt">P</text></svg></button>
  </div>
  <time class="clock"><span>10:23</span><span>03.03.2021</span></time>
</footer>
</body>
</html>
```
FILE: styles.css
```css
* { box-sizing: border-box; }
body { margin: 0; min-height: 100vh; display: flex; flex-direction: column; font: 11px/16px "Noto Sans", "Open Sans", sans-serif; color: #0c0c0d; }
button { border: 0; padding: 0; background: none; font: inherit; color: inherit; display: flex; align-items: center; justify-content: center; }
a { color: inherit; text-decoration: none; }
h1, h2, ul { margin: 0; padding: 0; font-size: inherit; }
svg { display: block; flex: none; overflow: visible; }
.defs { position: absolute; width: 0; height: 0; }
.i8 { width: 8px; height: 8px; }
.i10 { width: 10px; height: 10px; }
.i16 { width: 16px; height: 16px; }
.i24 { width: 24px; height: 24px; }

/* Browser chrome */
.browser { background: #f9f9fa; height: 102px; display: flex; flex-direction: column; }
.tabstrip { height: 33px; background: #202340; color: #f9f9fa; display: flex; }
.tabs { flex: 1; display: grid; grid-template-columns: repeat(8, minmax(0, 1fr)); }
.tab { display: flex; align-items: center; padding: 2px 12px 0 8px; border-right: 1px solid #5c5e73; }
.tab-title { flex: 1; margin-left: 6px; white-space: nowrap; overflow: hidden; -webkit-mask-image: linear-gradient(90deg, #000 calc(100% - 24px), transparent); mask-image: linear-gradient(90deg, #000 calc(100% - 24px), transparent); }
.tab-title.full { -webkit-mask-image: none; mask-image: none; }
.tab-on { background: #f9f9fa; color: #0c0c0d; border-top: 2px solid #0a84ff; padding-top: 0; }
.tab-x { width: 10px; height: 16px; opacity: .8; }
.newtab { width: 44px; padding-right: 12px; }
.winctl { display: flex; margin-left: 28px; padding-bottom: 2px; }
.winctl button { width: 46px; }
.navbar { height: 40px; display: flex; align-items: center; padding: 0 3px; }
.nb { width: 32px; height: 32px; }
.back { width: 34px; height: 34px; border: 1px solid #b5b5b7; border-radius: 50%; background: #fff; }
.urlbox { flex: 1; margin-left: 117px; height: 30px; background: #fff; border: 1px solid #bcbcbe; border-radius: 2px; display: flex; align-items: center; padding: 0 7px 0 6px; }
.urlsep { width: 1px; height: 22px; background: #dcdcde; margin: 0 5px 0 7px; }
.url { flex: 1; margin-left: 8px; border: 0; padding: 0; height: 26px; outline: 0; font: 13px/20px "Noto Sans", "Open Sans", sans-serif; color: transparent; background: linear-gradient(90deg, #7b7b7d 79px, #0c0c0d 79px 142px, #7b7b7d 142px); -webkit-background-clip: text; background-clip: text; }
.urlacts { display: flex; gap: 12px; }
.exts { display: flex; align-items: center; gap: 16px; margin-left: 124px; padding-right: 8px; }
.exsep { width: 1px; height: 32px; background: #d2d2d4; margin: 0 -5px 0 -4px; }
.gift { margin-right: 1px; }
.badged { position: relative; }
.badge { position: absolute; left: 10px; top: -6px; width: 14px; height: 12px; border-radius: 2px; background: #5c2bc0; color: #fff; font: bold 9px/12px "Open Sans", sans-serif; text-align: center; }
.bookmarks { height: 29px; display: flex; align-items: center; gap: 13px; padding: 0 12px 0 11px; border-bottom: 1px solid #d0d0d2; white-space: nowrap; }
.bookmarks a { display: flex; align-items: center; gap: 5px; }
.bookmarks .long { width: 147px; }
.more { margin: 0 0 0 auto; }
.t-abp { font: bold 7px "Liberation Sans", sans-serif; fill: #fff; text-anchor: middle; }
.t-oc { font: bold 9px "Liberation Sans", sans-serif; fill: #fff; text-anchor: middle; }
.t-p { font: bold 8px "Liberation Sans", sans-serif; fill: #fff; }
.t-ppt { font: bold 14px "Liberation Sans", sans-serif; fill: #fff; }

/* Editor */
.app { flex: 1; display: flex; flex-direction: column; position: relative; font: 11px/16px Inter, sans-serif; color: #232323; }
.toolbar { height: 40px; background: #1f1f1f; color: #a6a6a6; display: grid; grid-template-columns: 1fr auto 1fr; align-items: stretch; }
.tools { display: flex; }
.tool { width: 40px; }
.wide { width: 48px; gap: 6px; padding-left: 7px; }
.tool-on { background: #116fae; }
.title { display: flex; align-items: center; gap: 7px; padding-right: 4px; font-size: 13px; color: #757575; }
.title button { color: #b2b2b2; gap: 5px; }
.actions { display: flex; align-items: center; justify-content: flex-end; padding-right: 10px; position: relative; }
.avatar { width: 24px; height: 24px; border-radius: 50%; background: #c7b9ff; color: #fff; display: flex; align-items: center; justify-content: center; }
.dim { background: #8b81b2; color: #b8b3c9; }
.share { width: 54px; height: 30px; border-radius: 6px; background: #116fae; color: #b2b2b2; font-weight: 500; margin-left: 21px; }
.play { margin: 0 25px 0 22px; }
.zoom { gap: 5px; }
.cursor { position: absolute; right: 114px; top: 8px; }
.work { flex: 1; display: flex; }
.layers, .design { width: 240px; background: #b2b2b2; flex: none; }
.phead { height: 41px; border-bottom: 1px solid #9f9f9f; padding: 0 16px; display: flex; align-items: center; gap: 16px; color: #7d7d7d; font-weight: 500; }
.phead .on { color: #1f1f1f; font-weight: 600; }
.phead .page { margin-left: auto; color: #232323; font-weight: 400; gap: 4px; }
.page svg { color: #7d7d7d; }
.layers ul { list-style: none; margin-top: -1px; }
.layers li { height: 32px; display: flex; align-items: center; gap: 8px; padding-left: 16px; position: relative; }
.layers li svg { color: #808080; }
.layers .l1 { padding-left: 40px; }
.layers .l2 { padding-left: 64px; }
.layers .l1::before, .layers .l2::before { content: ""; position: absolute; top: 0; left: 24px; width: 8px; height: 8px; border-left: 1px solid #7d7d7d; }
.layers .l2::before { left: 48px; }
.layers .elbow::before { height: 16px; border-bottom: 1px solid #7d7d7d; }
.layers .violet { color: #553bb2; }
.layers .violet svg { color: #8b7fb6; }
.layers .comp { font-weight: 600; }
.layers .comp svg { color: #553bb2; }
.canvas { flex: 1; background: #a0a0a0; min-width: 0; overflow: hidden; display: flex; }
.drawing { flex: 1; align-self: stretch; overflow: hidden; }
.design { display: flex; flex-direction: column; }
.bg { padding: 16px; border-bottom: 1px solid #9f9f9f; height: 81px; display: flex; flex-direction: column; gap: 16px; }
.design h2 { font-weight: 600; }
.bgrow { display: flex; align-items: center; }
.swatch { width: 16px; height: 16px; background: #a0a0a0; border: 1px solid #9a9a9a; }
.hex { margin-left: 8px; width: 72px; }
.bgrow button { margin-left: auto; margin-right: 1px; }
.export { height: 49px; border-bottom: 1px solid #9f9f9f; padding: 0 18px 0 16px; display: flex; align-items: center; justify-content: space-between; color: #7d7d7d; }
.help { width: 36px; height: 36px; border-radius: 50%; background: #1f1f1f; margin: auto 24px 24px auto; }

/* Share dialog */
.overlay { position: absolute; inset: 0; padding-top: 141px; display: flex; justify-content: center; align-items: flex-start; }
.modal { width: 459px; background: #fff; border-radius: 2px; box-shadow: 0 2px 14px rgba(0,0,0,.25), 0 0 0 1px rgba(0,0,0,.2); color: #333; }
.mhead { height: 41px; border-bottom: 1px solid #e5e5e5; padding: 0 14px 0 16px; display: flex; align-items: center; justify-content: space-between; }
.mhead h1 { font-weight: 600; }
.mbody { padding: 16px 16px 12px; }
.invite { display: flex; align-items: center; gap: 12px; margin-bottom: 8px; }
.field { flex: 1; height: 36px; border: 1px solid #e5e5e5; border-radius: 2px; display: flex; align-items: center; padding: 0 13px 0 12px; }
.field input { flex: 1; min-width: 0; border: 0; outline: 0; padding: 0; font: inherit; color: inherit; }
.field input::placeholder { color: #d0d0d0; }
.send { width: 96px; height: 32px; border-radius: 6px; background: #b3b3b3; color: #fff; font-weight: 600; }
.sel { display: flex; align-items: center; gap: 8px; }
.sel select { appearance: none; border: 0; background: none; padding: 0; font: inherit; color: inherit; field-sizing: content; }
.row { height: 40px; display: flex; align-items: center; gap: 12px; }
.ic { width: 24px; display: flex; justify-content: center; color: #111; }
.muted, .muted .ic { color: #b3b3b3; }
.end { margin-left: auto; }
.mfoot { height: 49px; border-top: 1px solid #e5e5e5; padding: 0 16px; display: flex; align-items: center; gap: 23px; }
.mfoot a { color: #18a0fb; display: flex; align-items: center; gap: 5px; }
.check { margin-left: auto; display: flex; align-items: center; gap: 9px; color: #b3b3b3; }
.check input { appearance: none; width: 13px; height: 13px; margin: 0; border: 1px solid #b8b8b8; }

/* Windows task bar */
.taskbar { height: 40px; background: #1d1d1d; color: #fff; display: flex; }
.sys { display: flex; margin-right: 3px; }
.sys button { width: 48px; }
.tasks { display: flex; gap: 1px; }
.task { width: 48px; position: relative; }
.cur { background: linear-gradient(90deg, #4d4d4d 45px, #3a3a3a 45px); }
.cur::after, .run::after { content: ""; position: absolute; bottom: 0; left: 4px; right: 4px; height: 2px; background: #76b9ed; }
.cur::after { left: 0; right: 0; }
.run.multi::after { background: linear-gradient(90deg, #76b9ed 32px, #4f7fa6 32px); }
.clock { margin-left: auto; padding: 2px 6px 0 0; display: flex; flex-direction: column; align-items: center; font-family: "Open Sans", sans-serif; line-height: 18px; }
```
